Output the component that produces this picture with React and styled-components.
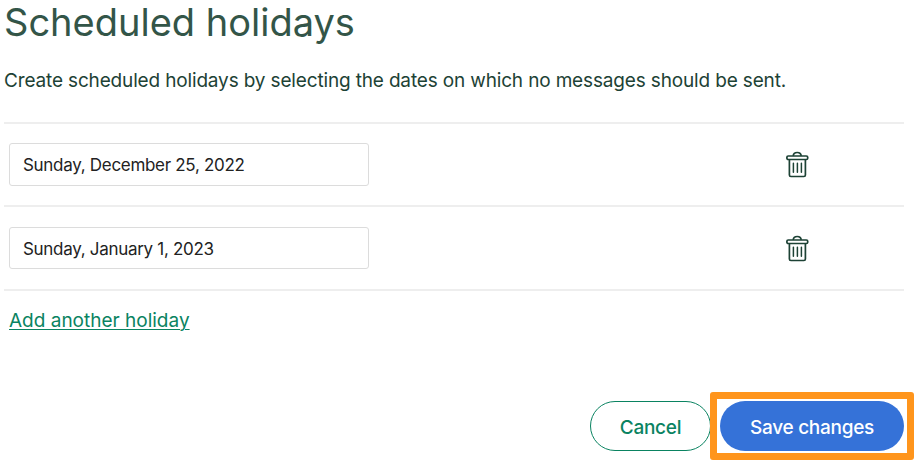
import { useState } from "react";
import styled, { createGlobalStyle } from "styled-components";

function TrashIcon() {
  return (
    <svg width="24" height="27" viewBox="0 0 24 27" fill="none" stroke="#1d4235">
      <path d="M8.200 4.800C8.400 2.600 9.800 1.500 12.200 1.500S16 2.600 16.200 4.800" strokeWidth="1.700" />
      <rect x="1.900" y="5" width="20.800" height="3.500" rx="1.300" strokeWidth="1.700" />
      <path
        d="M4.400 8.700V24Q4.400 25.500 5.900 25.500H18.900Q20.400 25.500 20.400 24V8.700"
        strokeWidth="1.700"
      />
      <path
        d="M8.400 12.300V21.200M12.400 12.300V21.200M16.400 12.300V21.200"
        strokeWidth="1.500"
        strokeLinecap="round"
      />
    </svg>
  );
}

function App() {
  const [holidays, setHolidays] = useState([
    "Sunday, December 25, 2022",
    "Sunday, January 1, 2023",
  ]);

  const removeHoliday = (index) => {
    setHolidays(holidays.filter((_, i) => i !== index));
  };

  return (
    <Page>
      <GlobalStyle />
      <Title>Scheduled holidays</Title>
      <Description>
        Create scheduled holidays by selecting the dates on which no messages
        should be sent.
      </Description>
      <HolidayList>
        {holidays.map((holiday, index) => (
          <HolidayRow key={index}>
            <DateInput defaultValue={holiday} />
            <DeleteButton onClick={() => removeHoliday(index)}>
              <TrashIcon />
            </DeleteButton>
          </HolidayRow>
        ))}
      </HolidayList>
      <AddLink onClick={() => setHolidays([...holidays, ""])}>
        Add another holiday
      </AddLink>
      <Footer>
        <Button $width="121px">Cancel</Button>
        <Highlight>
          <Button $primary $width="184px">
            Save changes
          </Button>
        </Highlight>
      </Footer>
    </Page>
  );
}
export default App;

const GlobalStyle = createGlobalStyle`
  * {
    box-sizing: border-box;
  }
  body {
    margin: 0;
    background: #fff;
    overflow: hidden;
  }
  button, input {
    font-family: inherit;
  }
`;
const Page = styled.div`
  display: flex;
  flex-direction: column;
  width: 914px;
  height: 461px;
  padding: 0 10px 10px 4px;
  font-family: Inter, "Liberation Sans", sans-serif;
  color: #1d4235;
`;
const Title = styled.h1`
  margin: 0;
  height: 66px;
  font-size: 38px;
  font-weight: 400;
  line-height: 45px;
  letter-spacing: 0;
  color: #335548;
  white-space: nowrap;
`;
const Description = styled.p`
  margin: 0;
  height: 56px;
  font-size: 19px;
  line-height: 30px;
  letter-spacing: -0.155px;
  white-space: nowrap;
`;
const HolidayList = styled.div`
  border-top: 2px solid #eee;
`;
const DateInput = styled.input`
  width: 360px;
  height: 43px;
  padding: 1px 13px 0;
  border: 1px solid #dcdcdc;
  border-radius: 3px;
  font-size: 17px;
  letter-spacing: -0.3px;
  color: #222;
  outline: none;
`;
const HolidayRow = styled.div`
  display: flex;
  align-items: center;
  justify-content: space-between;
  height: 83px;
  padding: 0 95px 0 5px;
  border-bottom: 2px solid #eee;

  & + & {
    height: 84px;
  }
  & + & ${DateInput} {
    height: 42px;
  }
`;
const DeleteButton = styled.button`
  display: flex;
  padding: 0;
  border: none;
  background: none;
  cursor: pointer;
`;
const AddLink = styled.button`
  align-self: flex-start;
  margin: 18px 0 0 5px;
  padding: 0;
  border: none;
  background: none;
  font-size: 19px;
  line-height: 24px;
  color: #0a8361;
  text-decoration: underline;
  text-decoration-thickness: 1px;
  text-underline-offset: 2px;
  cursor: pointer;
`;
const Footer = styled.div`
  display: flex;
  justify-content: flex-end;
  gap: 9px;
  margin-top: auto;
`;
const Button = styled.button`
  width: ${(props) => props.$width};
  height: 50px;
  padding: 2px 0 0;
  border: ${(props) => (props.$primary ? "none" : "1px solid #0a8361")};
  border-radius: 25px;
  background: ${(props) => (props.$primary ? "#3572d8" : "#fff")};
  color: ${(props) => (props.$primary ? "#fff" : "#0a8361")};
  font-size: 19px;
  font-weight: 500;
  letter-spacing: -0.27px;
  cursor: pointer;
`;
const Highlight = styled.div`
  position: relative;

  &::after {
    content: "";
    position: absolute;
    inset: -9px -10px;
    border: 7px solid #ff951c;
    border-radius: 3px;
    pointer-events: none;
  }
`;
